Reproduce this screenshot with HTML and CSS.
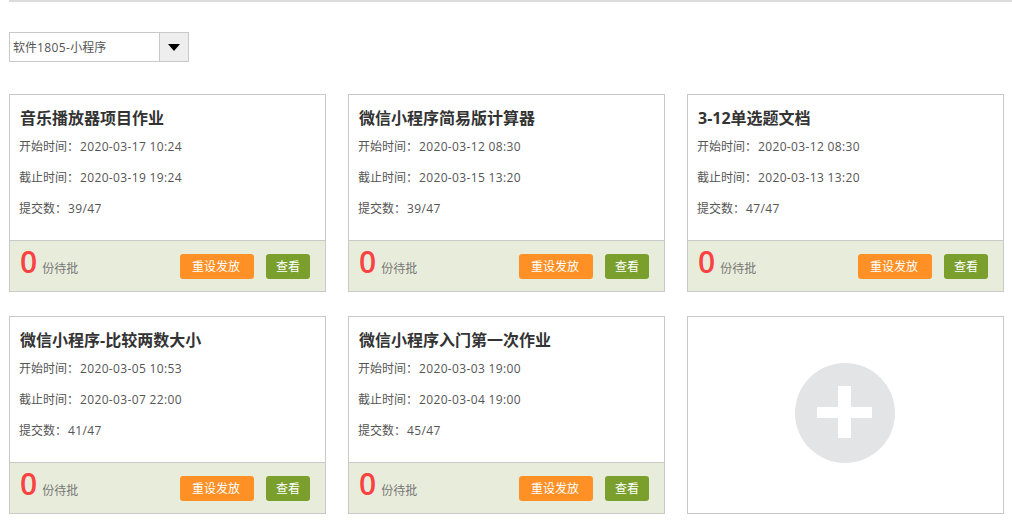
FILE: index.html
```html
<!DOCTYPE html>
<html lang="zh-CN">
<head>
<meta charset="utf-8">
<title>作业</title>
<link rel="stylesheet" href="styles.css">
</head>
<body>
<div class="page">
  <div class="select">
    <span class="select-label">软件<span class="num">1805-</span>小程序</span>
    <span class="select-btn"><span class="caret"></span></span>
  </div>
  <div class="grid">
    <div class="card">
      <div class="card-body">
        <h3 class="title">音乐播放器项目作业</h3>
        <p class="line">开始时间：<span class="num">2020-03-17 10:24</span></p>
        <p class="line">截止时间：<span class="num">2020-03-19 19:24</span></p>
        <p class="line">提交数：<span class="num">39/47</span></p>
      </div>
      <div class="card-foot">
        <span class="count">0</span><span class="pending">份待批</span>
        <span class="btn btn-orange">重设发放</span><span class="btn btn-green">查看</span>
      </div>
    </div>
    <div class="card">
      <div class="card-body">
        <h3 class="title">微信小程序简易版计算器</h3>
        <p class="line">开始时间：<span class="num">2020-03-12 08:30</span></p>
        <p class="line">截止时间：<span class="num">2020-03-15 13:20</span></p>
        <p class="line">提交数：<span class="num">39/47</span></p>
      </div>
      <div class="card-foot">
        <span class="count">0</span><span class="pending">份待批</span>
        <span class="btn btn-orange">重设发放</span><span class="btn btn-green">查看</span>
      </div>
    </div>
    <div class="card">
      <div class="card-body">
        <h3 class="title">3-12单选题文档</h3>
        <p class="line">开始时间：<span class="num">2020-03-12 08:30</span></p>
        <p class="line">截止时间：<span class="num">2020-03-13 13:20</span></p>
        <p class="line">提交数：<span class="num">47/47</span></p>
      </div>
      <div class="card-foot">
        <span class="count">0</span><span class="pending">份待批</span>
        <span class="btn btn-orange">重设发放</span><span class="btn btn-green">查看</span>
      </div>
    </div>
    <div class="card">
      <div class="card-body">
        <h3 class="title">微信小程序-比较两数大小</h3>
        <p class="line">开始时间：<span class="num">2020-03-05 10:53</span></p>
        <p class="line">截止时间：<span class="num">2020-03-07 22:00</span></p>
        <p class="line">提交数：<span class="num">41/47</span></p>
      </div>
      <div class="card-foot">
        <span class="count">0</span><span class="pending">份待批</span>
        <span class="btn btn-orange">重设发放</span><span class="btn btn-green">查看</span>
      </div>
    </div>
    <div class="card">
      <div class="card-body">
        <h3 class="title">微信小程序入门第一次作业</h3>
        <p class="line">开始时间：<span class="num">2020-03-03 19:00</span></p>
        <p class="line">截止时间：<span class="num">2020-03-04 19:00</span></p>
        <p class="line">提交数：<span class="num">45/47</span></p>
      </div>
      <div class="card-foot">
        <span class="count">0</span><span class="pending">份待批</span>
        <span class="btn btn-orange">重设发放</span><span class="btn btn-green">查看</span>
      </div>
    </div>
    <div class="card card-add">
      <svg class="add-icon" width="100" height="100" viewBox="0 0 100 100" aria-hidden="true">
        <circle cx="50" cy="50" r="50" fill="#e3e4e6"/>
        <path d="M43 23h13v21h21v11H56v20H43V55H22V44h21z" fill="#fff"/>
      </svg>
    </div>
  </div>
</div>
</body>
</html>
```
FILE: styles.css
```css
* { box-sizing: border-box; }
html, body { margin: 0; padding: 0; background: #fff; }
body {
  font-family: "Open Sans", "Noto Sans CJK SC", sans-serif;
  color: #444;
  height: 525px;
  overflow: hidden;
}
.page {
  margin-left: 9px;
  border-top: 2px solid #dcdcdc;
  padding-top: 30px;
}
.select {
  display: flex;
  width: 180px;
  height: 30px;
  border: 1px solid #c9c9c9;
  margin-bottom: 32px;
}
.select-label {
  flex: 1;
  font-size: 12px;
  line-height: 30px;
  padding-left: 3px;
  color: #555;
}
.select-label .num { letter-spacing: 0.4px; margin-left: 0; }
.select-btn {
  width: 29px;
  background: #eee;
  border-left: 1px solid #c9c9c9;
  display: flex;
  align-items: center;
  justify-content: center;
}
.caret {
  width: 0;
  height: 0;
  border-left: 6px solid transparent;
  border-right: 6px solid transparent;
  border-top: 7px solid #000;
}
.grid {
  display: grid;
  grid-template-columns: repeat(3, 317px);
  grid-auto-rows: 198px;
  column-gap: 22px;
  row-gap: 24px;
}
.card {
  border: 1px solid #c9c9c9;
  display: flex;
  flex-direction: column;
}
.card-body {
  flex: 1;
  padding: 10px 9px 0 9px;
}
.title {
  margin: 0 0 4px;
  padding-left: 1px;
  font-size: 16px;
  line-height: 26px;
  font-weight: 700;
  color: #333;
}
.line {
  margin: 0 0 7px;
  font-size: 12px;
  line-height: 24px;
  color: #555;
  font-family: "Open Sans", "Noto Sans CJK TC", sans-serif;
}
.num { letter-spacing: 0.35px; margin-left: 1px; }
.card-foot {
  height: 51px;
  background: #e8eddb;
  border-top: 1px solid #c9c9c9;
  display: flex;
  align-items: flex-start;
  padding: 0 15px 0 10px;
}
.count {
  font-size: 30px;
  line-height: 42px;
  color: #fb4242;
  font-weight: 600;
}
.pending {
  flex: 1;
  font-size: 12px;
  line-height: 18px;
  color: #777;
  margin-top: 19px;
  margin-left: 5px;
}
.btn {
  margin-top: 13px;
  height: 25px;
  line-height: 25px;
  border-radius: 3px;
  font-size: 12px;
  color: #fff;
  text-align: center;
}
.btn-orange { width: 74px; background: #ff9026; margin-right: 12px; padding-right: 2px; }
.btn-green { width: 44px; background: #7a9f2d; }
.card-add {
  align-items: center;
  justify-content: center;
  padding: 0 1px 4px 0;
}
.add-icon { display: block; }
```
